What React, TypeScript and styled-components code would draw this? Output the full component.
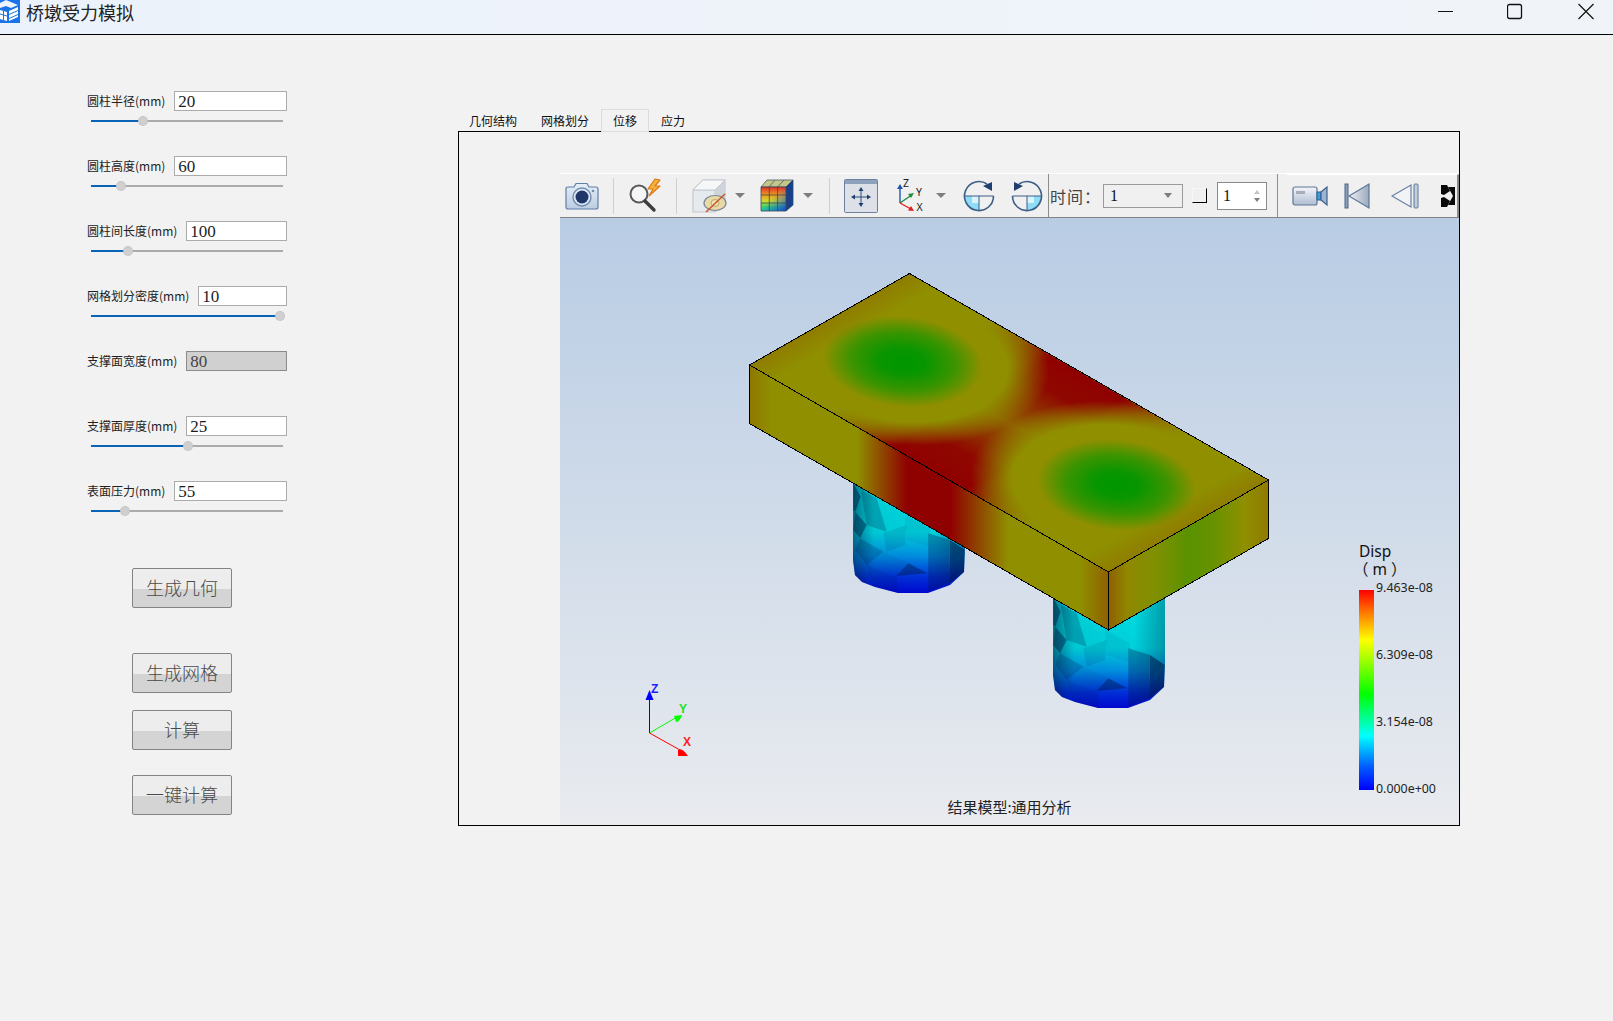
import React from "react";
import styled, { createGlobalStyle } from "styled-components";

const GlobalStyle = createGlobalStyle`
  html, body {
    margin: 0;
    padding: 0;
    background: #f2f2f2;
  }
  * {
    box-sizing: border-box;
  }
`;

const Window = styled.div`
  width: 1613px;
  height: 1021px;
  overflow: hidden;
  background: #f2f2f2;
  font-family: "Noto Sans CJK SC", "Noto Sans", sans-serif;
  color: #1a1a1a;
`;

// Title bar
const TitleBar = styled.header`
  display: flex;
  align-items: flex-start;
  height: 35px;
  background: linear-gradient(to right, #ecf2fb, #f0f4f9);
  border-bottom: 1px solid #000;
`;

const AppTitle = styled.span`
  margin-left: 6px;
  font-size: 18px;
  line-height: 24px;
  color: #222;
`;

const WindowButtons = styled.div`
  display: flex;
  margin-left: auto;
`;

const WindowButton = styled.svg<{ $width: number }>`
  display: block;
  width: ${(p) => p.$width}px;
  height: 24px;
`;

// Page body
const Body = styled.div`
  display: flex;
`;

const LeftPanel = styled.aside`
  width: 458px;
  padding: 56px 0 0 87px;
`;

const Field = styled.div`
  width: 200px;
  height: 65px;
`;

const FieldTop = styled.div`
  display: flex;
  align-items: center;
  gap: 9px;
  height: 20px;
`;

const FieldLabel = styled.label`
  font-size: 12px;
  line-height: 20px;
  white-space: nowrap;
  color: #222;
`;

const ValueInput = styled.input`
  flex: 1;
  min-width: 0;
  height: 20px;
  padding: 1px 3px 0;
  border: 1px solid ${(p) => (p.disabled ? "#8c8c8c" : "#ababab")};
  outline: ${(p) => (p.disabled ? "1px solid #cfcfcf" : "none")};
  outline-offset: -2px;
  border-radius: 0;
  background: ${(p) => (p.disabled ? "#d0d0d0" : "#fff")};
  font-family: "Liberation Serif", serif;
  font-size: 17px;
  color: ${(p) => (p.disabled ? "#444" : "#1c1c1c")};
  opacity: 1;
`;

const SliderTrack = styled.div`
  position: relative;
  width: 192px;
  height: 2px;
  margin: 9px 0 0 4px;
  background: #ababab;
`;

const SliderFill = styled.div`
  height: 2px;
  background: #0a63b5;
`;

const SliderThumb = styled.div`
  position: absolute;
  top: -4px;
  width: 10px;
  height: 10px;
  margin-left: -5px;
  border-radius: 50%;
  background: #cfcfcf;
  border: 1px dotted #bdbdbd;
`;

const ActionButton = styled.button<{ $top: number }>`
  display: block;
  width: 100px;
  height: 40px;
  margin: ${(p) => p.$top}px 0 0 45px;
  padding: 0 0 3px;
  border: 1px solid #848484;
  border-radius: 2px;
  background: linear-gradient(to bottom, #ededed 0, #ededed 52%, #d4d4d4 52%, #d4d4d4 100%);
  font-family: "Liberation Serif", "Noto Sans CJK SC", serif;
  font-size: 18px;
  font-weight: 300;
  color: #4a4a4a;
`;

// Tabs and the viewer
const RightPanel = styled.section`
  display: flex;
  flex-direction: column;
  padding-top: 74px;
`;

const TabBar = styled.div`
  display: flex;
  height: 22px;
  margin-left: -1px;
`;

const Tab = styled.div<{ $active?: boolean }>`
  position: relative;
  z-index: 1;
  height: ${(p) => (p.$active ? 23 : 22)}px;
  padding: 0 ${(p) => (p.$active ? 11 : 12)}px;
  border: ${(p) => (p.$active ? "1px solid #dcdcdc" : "none")};
  margin-bottom: -1px;
  background: ${(p) => (p.$active ? "#f2f2f2" : "transparent")};
  font-size: 12px;
  line-height: ${(p) => (p.$active ? 22 : 24)}px;
  color: #111;
`;

const Frame = styled.div`
  width: 1002px;
  height: 695px;
  padding: 41px 0 0 101px;
  border: 1px solid #000;
`;

const Viewer = styled.div`
  display: flex;
  flex-direction: column;
  width: 899px;
  height: 652px;
`;

const Toolbar = styled.div`
  display: flex;
  align-items: center;
  flex: none;
  height: 45px;
  background: #f0f0f0;
  border-top: 1px solid #fff;
  border-bottom: 1px solid #848484;
`;

const ToolIcon = styled.svg<{ $left: number }>`
  display: block;
  flex: none;
  margin-left: ${(p) => p.$left}px;
  overflow: visible;
`;

const Separator = styled.div<{ $left: number; $dark?: boolean }>`
  flex: none;
  align-self: ${(p) => (p.$dark ? "stretch" : "center")};
  width: 1px;
  height: ${(p) => (p.$dark ? "auto" : "36px")};
  margin-left: ${(p) => p.$left}px;
  background: ${(p) => (p.$dark ? "#8c8c8c" : "#cfcfcf")};
`;

const Caret = styled.div<{ $left: number }>`
  flex: none;
  width: 0;
  height: 0;
  margin-left: ${(p) => p.$left}px;
  border-left: 5px solid transparent;
  border-right: 5px solid transparent;
  border-top: 5px solid #7d7d7d;
`;

const TimeLabel = styled.span`
  flex: none;
  width: 53px;
  margin-left: 1px;
  white-space: nowrap;
  letter-spacing: 1px;
  font-family: "Liberation Serif", "Noto Sans CJK SC", serif;
  font-size: 16px;
  color: #444;
`;

const Combo = styled.div`
  display: flex;
  align-items: center;
  flex: none;
  width: 80px;
  height: 24px;
  padding: 0 10px 0 6px;
  border: 1px solid #9a9a9a;
  font-family: "Liberation Serif", serif;
  font-size: 16px;
  color: #111;
`;

const ComboCaret = styled.div`
  width: 0;
  height: 0;
  margin-left: auto;
  border-left: 4px solid transparent;
  border-right: 4px solid transparent;
  border-top: 5px solid #7d7d7d;
`;

const SunkenBox = styled.div`
  flex: none;
  width: 15px;
  height: 15px;
  margin-left: 9px;
  border-style: solid;
  border-width: 1px;
  border-color: #f6f6f6 #000 #000 #f6f6f6;
`;

const Spin = styled.div`
  display: flex;
  align-items: center;
  justify-content: space-between;
  flex: none;
  width: 50px;
  height: 28px;
  margin-left: 10px;
  padding: 0 6px 0 5px;
  border: 1px solid #8a8a8a;
  background: #fff;
  font-family: "Liberation Serif", serif;
  font-size: 16px;
  color: #111;
`;

const SpinArrows = styled.div`
  display: flex;
  flex-direction: column;
  gap: 4px;
`;

const SpinArrow = styled.div<{ $up?: boolean }>`
  width: 0;
  height: 0;
  border-left: 3px solid transparent;
  border-right: 3px solid transparent;
  border-bottom: ${(p) => (p.$up ? "4px solid #c4c4c4" : "none")};
  border-top: ${(p) => (p.$up ? "none" : "4px solid #7d7d7d")};
`;

const PlayerBar = styled.div`
  display: flex;
  align-items: center;
  align-self: stretch;
  flex: none;
  width: 172px;
  margin-left: 9px;
  overflow: hidden;
  background: #f0f0f0;
  border-top: 1px solid #fff;
  border-right: 2px solid #8a8a8a;
`;

const Viewport = styled.div`
  position: relative;
  flex: 1;
  background: linear-gradient(to bottom, #b8cce4, #e9ebef);
`;

const ModelDrawing = styled.svg`
  position: absolute;
  inset: 0;
  display: block;
`;

const Legend = styled.div`
  position: absolute;
  top: 324px;
  left: 799px;
`;

const LegendTitle = styled.div`
  font-family: "Noto Sans", "Noto Sans CJK SC", sans-serif;
  font-size: 15.5px;
  line-height: 18px;
  color: #111;
`;

const LegendUnit = styled(LegendTitle)`
  margin-left: -6px;
  white-space: pre;
`;

const LegendBody = styled.div`
  display: flex;
  height: 200px;
  margin-top: 12px;
`;

const LegendBar = styled.div`
  width: 15px;
  background: linear-gradient(to bottom, #ff0000 0, #ff8000 12%, #ffff00 25%, #00ff00 52%, #00ffff 73%, #0060ff 88%, #0000ff 100%);
`;

const LegendScale = styled.div`
  display: flex;
  flex-direction: column;
  justify-content: space-between;
  height: 217px;
  margin: -10px 0 0 2px;
`;

const LegendValue = styled.span`
  font-family: "Noto Sans", sans-serif;
  font-size: 12.4px;
  line-height: 16px;
  color: #222;
`;

const Caption = styled.div`
  position: absolute;
  left: 0;
  right: 0;
  bottom: 8px;
  text-align: center;
  font-size: 15px;
  line-height: 20px;
  color: #222;
`;

const fields = [
  { label: "圆柱半径(mm)", value: "20", thumb: 52 },
  { label: "圆柱高度(mm)", value: "60", thumb: 30 },
  { label: "圆柱间长度(mm)", value: "100", thumb: 37 },
  { label: "网格划分密度(mm)", value: "10", thumb: 189 },
  { label: "支撑面宽度(mm)", value: "80", disabled: true },
  { label: "支撑面厚度(mm)", value: "25", thumb: 97 },
  { label: "表面压力(mm)", value: "55", thumb: 34 },
];

const buttons = [
  { text: "生成几何", top: 22 },
  { text: "生成网格", top: 45 },
  { text: "计算", top: 17 },
  { text: "一键计算", top: 25 },
];

const tabs = ["几何结构", "网格划分", "位移", "应力"];

const AppLogo = () => (
  <svg width="20" height="23" viewBox="0 0 20 23">
    <rect width="20" height="23" fill="#1a73e8" />
    <path d="M0 3 L6 0 L18 5 L11 8 L6 6 L0 8 Z" fill="#fff" opacity="0.92" />
    <path d="M0 10 L7 12 L7 21 L0 19 Z" fill="#fff" />
    <path d="M9 11 L18 7 L18 10 L9 14 Z M9 15 L18 11 L18 14 L9 18 Z M9 19 L18 15 L18 17 L9 21 Z" fill="#fff" />
    <path d="M0 14 L7 16 M3.5 11 L3.5 20" stroke="#1a73e8" strokeWidth="1" />
  </svg>
);

const CameraIcon = () => (
  <ToolIcon $left={5} width="34" height="28" viewBox="0 0 34 28">
    <defs>
      <linearGradient id="camBody" x1="0" y1="0" x2="0" y2="1">
        <stop offset="0" stopColor="#e6eef8" />
        <stop offset="1" stopColor="#bccde2" />
      </linearGradient>
    </defs>
    <path d="M1 7 Q1 5 3 5 L9 5 L11 1.5 L22 1.5 L24 5 L31 5 Q33 5 33 7 L33 25 Q33 27 31 27 L3 27 Q1 27 1 25 Z" fill="url(#camBody)" stroke="#5f7fa6" strokeWidth="1.2" />
    <circle cx="17" cy="15" r="9" fill="#dfe8f3" stroke="#6f8cb0" strokeWidth="1.4" />
    <circle cx="17" cy="15" r="6.5" fill="#1f3768" />
    <circle cx="28" cy="9" r="1.3" fill="#6f8cb0" />
  </ToolIcon>
);

const SearchBoltIcon = () => (
  <ToolIcon $left={14} width="36" height="34" viewBox="0 0 36 34">
    <circle cx="11" cy="15" r="8.5" fill="#f4f6f8" stroke="#5a5a5a" strokeWidth="2" />
    <path d="M17 22 L26 31" stroke="#3d3d3d" strokeWidth="3.4" strokeLinecap="round" />
    <path d="M27 0 L20 10 L25 10 L21 17 L32 7 L27 7 L32 1 Z" fill="#f2b23c" stroke="#de7a16" strokeWidth="1.2" strokeLinejoin="round" />
  </ToolIcon>
);

const HideCubeIcon = () => (
  <ToolIcon $left={15} width="36" height="34" viewBox="0 0 36 34">
    <path d="M1 11 L11 1 L33 1 L33 23 L23 33 L1 33 Z" fill="#e6e9ee" stroke="#c3c8cf" strokeWidth="1.2" />
    <path d="M1 11 L23 11 L23 33 M23 11 L33 1" fill="none" stroke="#c3c8cf" strokeWidth="1.2" />
    <path d="M23 11 L33 1 L33 23 L23 33 Z" fill="#cfd4db" />
    <path d="M1 11 L11 1 L33 1 L23 11 Z" fill="#f6f7f9" stroke="#c3c8cf" strokeWidth="1" />
    <ellipse cx="23" cy="24" rx="11" ry="7.5" fill="#e8d9a6" stroke="#7c8796" strokeWidth="1.2" />
    <ellipse cx="23" cy="24" rx="4" ry="3.5" fill="#f0e2b0" stroke="#a89a64" strokeWidth="0.8" />
    <path d="M14 33 L33 15" stroke="#c9562a" strokeWidth="1.5" />
  </ToolIcon>
);

const ColorCubeIcon = () => (
  <ToolIcon $left={15} width="34" height="33" viewBox="0 0 34 33">
    <defs>
      <linearGradient id="cubeRainbow" x1="0" y1="0" x2="0" y2="1">
        <stop offset="0" stopColor="#e0302a" />
        <stop offset="0.35" stopColor="#f0a020" />
        <stop offset="0.6" stopColor="#c8dc30" />
        <stop offset="0.85" stopColor="#30d070" />
        <stop offset="1" stopColor="#20c8b0" />
      </linearGradient>
      <linearGradient id="cubeCold" x1="0" y1="0" x2="1" y2="1">
        <stop offset="0.45" stopColor="#2060e0" stopOpacity="0" />
        <stop offset="1" stopColor="#1040d0" stopOpacity="0.95" />
      </linearGradient>
    </defs>
    <path d="M7 1 L33 1 L26 8 L1 8 Z" fill="#c3c88a" stroke="#4a5a66" strokeWidth="0.8" />
    <path d="M15 1 L9 8 M24 1 L17.5 8" stroke="#4a5a66" strokeWidth="0.8" />
    <path d="M26 8 L33 1 L33 26 L26 32 Z" fill="#173f8c" stroke="#274a78" strokeWidth="0.8" />
    <rect x="1" y="8" width="25" height="24" fill="url(#cubeRainbow)" />
    <rect x="1" y="8" width="25" height="24" fill="url(#cubeCold)" />
    <path d="M1 8 L26 8 L26 32 L1 32 Z M9.3 8 L9.3 32 M17.6 8 L17.6 32 M1 16 L26 16 M1 24 L26 24" fill="none" stroke="#3c4650" strokeWidth="0.8" />
  </ToolIcon>
);

const PanIcon = () => (
  <ToolIcon $left={14} width="34" height="34" viewBox="0 0 34 34">
    <rect x="0.5" y="0.5" width="33" height="33" rx="1" fill="#dde1e7" stroke="#6d80a0" />
    <rect x="1" y="1" width="32" height="4" fill="#8ea2bd" />
    <path d="M17 11 L17 25 M10 18 L24 18" stroke="#2d4d78" strokeWidth="1" />
    <path d="M17 8 L14.5 12 L19.5 12 Z M17 28 L14.5 24 L19.5 24 Z M7 18 L11 15.5 L11 20.5 Z M27 18 L23 15.5 L23 20.5 Z" fill="#1f3f70" />
  </ToolIcon>
);

const AxesIcon = () => (
  <ToolIcon $left={19} width="27" height="35" viewBox="0 0 27 35">
    <path d="M3 25 L3 10" stroke="#1f55b8" strokeWidth="1.4" />
    <path d="M3 6 L0 11 L6 11 Z" fill="#1f55b8" />
    <path d="M3 25 L14 17.5" stroke="#1e8c3c" strokeWidth="1.4" />
    <path d="M17 15 L11 16 L14 20 Z" fill="#1e8c3c" />
    <path d="M3 25 L14 31" stroke="#e02020" strokeWidth="1.4" />
    <path d="M17 33 L11 32.5 L14 28 Z" fill="#e02020" />
    <text x="6" y="8.5" fontFamily="Noto Sans" fontSize="10.5" fill="#222">Z</text>
    <text x="19" y="18" fontFamily="Noto Sans" fontSize="10.5" fill="#222">Y</text>
    <text x="19.5" y="33" fontFamily="Noto Sans" fontSize="10.5" fill="#222">X</text>
  </ToolIcon>
);

const RotateIcon = ({ left, flip }: { left: number; flip?: boolean }) => (
  <ToolIcon $left={left} width="32" height="32" viewBox="0 0 32 32">
    <g transform={flip ? "translate(32 0) scale(-1 1)" : undefined}>
      <path d="M16 16 L1.5 16 A14.5 14.5 0 0 0 16 30.5 Z" fill="#8fdcf6" />
      <path d="M16 16 L9 16 L9 23 L16 23 Z" fill="#d8f4fc" />
      <path d="M1.5 16 L30.5 16 M16 16 L16 30.5" stroke="#3d5f86" strokeWidth="1" />
      <path d="M24 4 A14.5 14.5 0 1 0 30.5 16" fill="none" stroke="#3d5f86" strokeWidth="1.6" />
      <path d="M29 2 L29 11 L20 6 Z" fill="#1f3f70" />
    </g>
  </ToolIcon>
);

const VideoIcon = () => (
  <ToolIcon $left={5} width="36" height="20" viewBox="0 0 36 20">
    <defs>
      <linearGradient id="videoBody" x1="0" y1="0" x2="0" y2="1">
        <stop offset="0" stopColor="#f4f6fa" />
        <stop offset="1" stopColor="#aebdd2" />
      </linearGradient>
    </defs>
    <rect x="1" y="1" width="24" height="18" rx="2" fill="url(#videoBody)" stroke="#5f7697" strokeWidth="1.2" />
    <rect x="4" y="5" width="9" height="3" fill="#a5adba" />
    <rect x="25" y="6" width="4" height="8" fill="#3a9fd8" stroke="#2a5f96" />
    <path d="M29 6 L35 1 L35 19 L29 14 Z" fill="#9bb6d4" stroke="#3f6088" strokeWidth="1.2" />
  </ToolIcon>
);

const FirstFrameIcon = () => (
  <ToolIcon $left={16} width="26" height="26" viewBox="0 0 26 26">
    <defs>
      <linearGradient id="frameFill" x1="0" y1="0" x2="1" y2="0">
        <stop offset="0" stopColor="#eef1f5" />
        <stop offset="1" stopColor="#9aa9bd" />
      </linearGradient>
    </defs>
    <rect x="1" y="1" width="3" height="24" fill="#8ea0b8" stroke="#47648c" />
    <path d="M5 13 L25 1 L25 25 Z" fill="url(#frameFill)" stroke="#5f7697" strokeWidth="1.2" />
  </ToolIcon>
);

const PrevFrameIcon = () => (
  <ToolIcon $left={21} width="28" height="26" viewBox="0 0 28 26">
    <path d="M1 13 L20 2 L20 24 Z" fill="#f1f3f6" stroke="#6a81a2" strokeWidth="1.2" />
    <rect x="23" y="1" width="4" height="24" rx="1" fill="#c3cedd" stroke="#5f7697" />
  </ToolIcon>
);

const NextFrameClipped = () => (
  <ToolIcon $left={22} width="14" height="24" viewBox="0 0 14 24">
    <path d="M0 1 L6 1 L9 7 L3 11 L0 10 Z M0 23 L6 23 L9 17 L3 13 L0 14 Z" fill="#0a0a0a" />
    <path d="M7 3 L14 3 L14 21 L7 21 L12 12 Z" fill="#0a0a0a" />
  </ToolIcon>
);

// pier facets, in 3x units of the left pier (page origin 830,470)
const facets = [
  { points: "70,40 92,80 76,125 70,120", shade: 0.45 },
  { points: "92,60 140,85 170,185 110,165", shade: 0.22 },
  { points: "75,125 110,165 90,205 70,180", shade: 0.42 },
  { points: "90,205 160,245 110,285 75,240", shade: 0.2 },
  { points: "110,285 200,320 205,370 130,350", shade: 0.12 },
  { points: "160,245 235,280 200,318 110,285", shade: 0.05 },
  { points: "200,318 235,280 292,310", shade: 0.4 },
  { points: "295,190 360,210 358,340 295,365", shade: 0.3 },
  { points: "360,210 405,240 360,280", shade: 0.55 },
  { points: "360,280 405,240 402,305 358,340", shade: 0.5 },
  { points: "225,135 300,175 295,230 230,210", shade: 0.06 },
  { points: "160,190 230,165 225,225 170,245", shade: 0.1 },
];

const Pier = ({ dx, dy, id }: { dx: number; dy: number; id: string }) => (
  <g transform={`translate(${dx} ${dy})`}>
    <clipPath id={id}>
      <path d="M853 470 L853 560 L855 575 L862 582 L875 587 L898 593 L928 593 L950 585 L964 572 L965 548 L965 470 Z" />
    </clipPath>
    <g clipPath={`url(#${id})`}>
      <rect x="850" y="470" width="120" height="126" fill="url(#pierColor)" />
      <g transform="translate(830 470) scale(0.3333)">
        {facets.map((f, i) => (
          <polygon key={i} points={f.points} fill="#001040" opacity={f.shade} />
        ))}
      </g>
      <rect x="850" y="470" width="120" height="126" fill="url(#pierSides)" />
    </g>
  </g>
);

const blobStops = (
  <>
    <stop offset="0" stopColor="#009600" />
    <stop offset="0.14" stopColor="#089600" />
    <stop offset="0.32" stopColor="#3a9400" />
    <stop offset="0.5" stopColor="#8f8f00" />
    <stop offset="0.66" stopColor="#8f8f00" />
    <stop offset="0.92" stopColor="#8f8f00" stopOpacity="0" />
  </>
);

const BeamModel = () => (
  <ModelDrawing width="899" height="607" viewBox="560 218 899 607">
    <defs>
      <linearGradient id="pierColor" x1="0" y1="0" x2="0" y2="1">
        <stop offset="0" stopColor="#00e0e0" />
        <stop offset="0.5" stopColor="#00d0dc" />
        <stop offset="0.68" stopColor="#0090e0" />
        <stop offset="0.85" stopColor="#0030d8" />
        <stop offset="1" stopColor="#0000d0" />
      </linearGradient>
      <linearGradient id="pierSides" x1="0" y1="0" x2="1" y2="0">
        <stop offset="0" stopColor="#001030" stopOpacity="0.55" />
        <stop offset="0.2" stopColor="#001030" stopOpacity="0.05" />
        <stop offset="0.7" stopColor="#001030" stopOpacity="0" />
        <stop offset="1" stopColor="#001030" stopOpacity="0.35" />
      </linearGradient>
      <radialGradient id="leftBlob" gradientUnits="userSpaceOnUse" cx="41" cy="50" r="66">
        {blobStops}
      </radialGradient>
      <radialGradient id="rightBlob" gradientUnits="userSpaceOnUse" cx="160" cy="50" r="66">
        {blobStops}
      </radialGradient>
      <linearGradient id="hotAcross" gradientUnits="userSpaceOnUse" x1="0" y1="0" x2="0" y2="100">
        <stop offset="0" stopColor="#8f0000" />
        <stop offset="0.2" stopColor="#8f0800" />
        <stop offset="0.5" stopColor="#8f5a00" />
        <stop offset="0.8" stopColor="#8f0800" />
        <stop offset="1" stopColor="#8f0000" />
      </linearGradient>
      <linearGradient id="hotAlong" gradientUnits="userSpaceOnUse" x1="0" y1="0" x2="200" y2="0">
        <stop offset="0.22" stopColor="#000" />
        <stop offset="0.4" stopColor="#fff" />
        <stop offset="0.6" stopColor="#fff" />
        <stop offset="0.78" stopColor="#000" />
      </linearGradient>
      <mask id="hotBand" maskUnits="userSpaceOnUse" x="0" y="0" width="200" height="100">
        <rect x="0" y="0" width="200" height="100" fill="url(#hotAlong)" />
      </mask>
      <linearGradient id="leftEnd" gradientUnits="userSpaceOnUse" x1="0" y1="0" x2="14" y2="0">
        <stop offset="0" stopColor="#8f7800" stopOpacity="0.8" />
        <stop offset="1" stopColor="#8f7800" stopOpacity="0" />
      </linearGradient>
      <linearGradient id="rightEnd" gradientUnits="userSpaceOnUse" x1="200" y1="0" x2="186" y2="0">
        <stop offset="0" stopColor="#8f7800" stopOpacity="0.8" />
        <stop offset="1" stopColor="#8f7800" stopOpacity="0" />
      </linearGradient>
      <linearGradient id="frontFace" gradientUnits="userSpaceOnUse" x1="749.6" y1="0" x2="1108.6" y2="0">
        <stop offset="0" stopColor="#8f7800" />
        <stop offset="0.06" stopColor="#8f8f00" />
        <stop offset="0.3" stopColor="#8f8f00" />
        <stop offset="0.38" stopColor="#8f3c00" />
        <stop offset="0.44" stopColor="#8f0000" />
        <stop offset="0.56" stopColor="#8f0000" />
        <stop offset="0.64" stopColor="#8f4800" />
        <stop offset="0.72" stopColor="#8f8f00" />
        <stop offset="0.92" stopColor="#8f8f00" />
        <stop offset="1" stopColor="#8f6000" />
      </linearGradient>
      <linearGradient id="sideFace" gradientUnits="userSpaceOnUse" x1="1108.6" y1="0" x2="1268.2" y2="0">
        <stop offset="0" stopColor="#8f6000" />
        <stop offset="0.12" stopColor="#8f8800" />
        <stop offset="0.3" stopColor="#7f9000" />
        <stop offset="0.5" stopColor="#5a9200" />
        <stop offset="0.66" stopColor="#689200" />
        <stop offset="0.85" stopColor="#8f8f00" />
        <stop offset="1" stopColor="#8f7a00" />
      </linearGradient>
    </defs>

    <Pier dx={0} dy={0} id="pierA" />
    <Pier dx={200} dy={115} id="pierB" />

    <path d="M749.5 365 L1108.5 572 L1108.5 630 L749.5 423.5 Z" fill="url(#frontFace)" />
    <path d="M1108.5 572 L1268.5 480 L1268.5 538.5 L1108.5 630 Z" fill="url(#sideFace)" />

    {/* top face, drawn in a 200 x 100 plane */}
    <g transform="matrix(1.795 1.035 1.6 -0.915 749.5 365)">
      <rect x="0" y="0" width="200" height="100" fill="#8f8f00" />
      <rect x="0" y="0" width="200" height="100" fill="url(#hotAcross)" mask="url(#hotBand)" />
      <rect x="0" y="0" width="200" height="100" fill="url(#leftBlob)" />
      <rect x="0" y="0" width="200" height="100" fill="url(#rightBlob)" />
      <rect x="0" y="0" width="14" height="100" fill="url(#leftEnd)" />
      <rect x="186" y="0" width="14" height="100" fill="url(#rightEnd)" />
    </g>

    <g fill="none" stroke="#000" strokeWidth="1" shapeRendering="crispEdges">
      <path d="M749.5 365 L909.5 273.5 L1268.5 480 L1108.5 572 Z" />
      <path d="M749.5 365 L749.5 423.5 L1108.5 630 L1268.5 538.5 L1268.5 480" />
      <path d="M1108.5 572 L1108.5 630" />
    </g>

    {/* orientation triad */}
    <path d="M649.5 733 L649.5 698" stroke="#0000ff" strokeWidth="1" />
    <path d="M649.5 690 L645.5 700 L653.5 700 Z" fill="#0000ff" />
    <path d="M649.5 733 L677 717" stroke="#00ff00" strokeWidth="1" />
    <path d="M682 715 L674 716 L676 722 Q680 722 682 715 Z" fill="#00ff00" />
    <path d="M649.5 733 L680 750" stroke="#ff0000" strokeWidth="1" />
    <path d="M688 756 L678 756 L678 750 Q682 747 688 756 Z" fill="#ff0000" />
    <text x="651" y="693" fontFamily="Liberation Sans" fontWeight="700" fontSize="12" fill="#2020ff">Z</text>
    <text x="679" y="713" fontFamily="Liberation Sans" fontWeight="700" fontSize="12" fill="#20e020">Y</text>
    <text x="683" y="746" fontFamily="Liberation Sans" fontWeight="700" fontSize="12" fill="#ff2020">X</text>
  </ModelDrawing>
);

const App = () => {
  return (
    <Window>
      <GlobalStyle />

      {/* Title bar */}
      <TitleBar>
        <AppLogo />
        <AppTitle>桥墩受力模拟</AppTitle>
        <WindowButtons>
          <WindowButton $width={69}>
            <path d="M0 11.5 L15 11.5" stroke="#111" strokeWidth="1" />
          </WindowButton>
          <WindowButton $width={71}>
            <rect x="0.5" y="4.5" width="14" height="14" rx="2" fill="none" stroke="#111" strokeWidth="1.3" />
          </WindowButton>
          <WindowButton $width={35}>
            <path d="M0.5 4 L15.5 19 M15.5 4 L0.5 19" stroke="#111" strokeWidth="1.2" />
          </WindowButton>
        </WindowButtons>
      </TitleBar>

      <Body>
        {/* Parameters */}
        <LeftPanel>
          {fields.map((field) => (
            <Field key={field.label}>
              <FieldTop>
                <FieldLabel>{field.label}</FieldLabel>
                <ValueInput value={field.value} readOnly disabled={field.disabled} />
              </FieldTop>
              {field.thumb !== undefined && (
                <SliderTrack>
                  <SliderFill style={{ width: field.thumb }} />
                  <SliderThumb style={{ left: field.thumb }} />
                </SliderTrack>
              )}
            </Field>
          ))}
          {buttons.map((button) => (
            <ActionButton key={button.text} $top={button.top}>
              {button.text}
            </ActionButton>
          ))}
        </LeftPanel>

        {/* Tabs and viewer */}
        <RightPanel>
          <TabBar>
            {tabs.map((tab) => (
              <Tab key={tab} $active={tab === "位移"}>
                {tab}
              </Tab>
            ))}
          </TabBar>
          <Frame>
            <Viewer>
              <Toolbar>
                <CameraIcon />
                <Separator $left={14} />
                <SearchBoltIcon />
                <Separator $left={12} />
                <HideCubeIcon />
                <Caret $left={7} />
                <ColorCubeIcon />
                <Caret $left={9} />
                <Separator $left={16} />
                <PanIcon />
                <AxesIcon />
                <Caret $left={12} />
                <RotateIcon left={17} />
                <RotateIcon left={16} flip />
                <Separator $left={5} $dark />
                <TimeLabel>时间：</TimeLabel>
                <Combo>
                  1
                  <ComboCaret />
                </Combo>
                <SunkenBox />
                <Spin>
                  1
                  <SpinArrows>
                    <SpinArrow $up />
                    <SpinArrow />
                  </SpinArrows>
                </Spin>
                <Separator $left={10} $dark />
                <PlayerBar>
                  <VideoIcon />
                  <FirstFrameIcon />
                  <PrevFrameIcon />
                  <NextFrameClipped />
                </PlayerBar>
              </Toolbar>
              <Viewport>
                <BeamModel />
                <Legend>
                  <LegendTitle>Disp</LegendTitle>
                  <LegendUnit>（ m ）</LegendUnit>
                  <LegendBody>
                    <LegendBar />
                    <LegendScale>
                      <LegendValue>9.463e-08</LegendValue>
                      <LegendValue>6.309e-08</LegendValue>
                      <LegendValue>3.154e-08</LegendValue>
                      <LegendValue>0.000e+00</LegendValue>
                    </LegendScale>
                  </LegendBody>
                </Legend>
                <Caption>结果模型:通用分析</Caption>
              </Viewport>
            </Viewer>
          </Frame>
        </RightPanel>
      </Body>
    </Window>
  );
};

export default App;
